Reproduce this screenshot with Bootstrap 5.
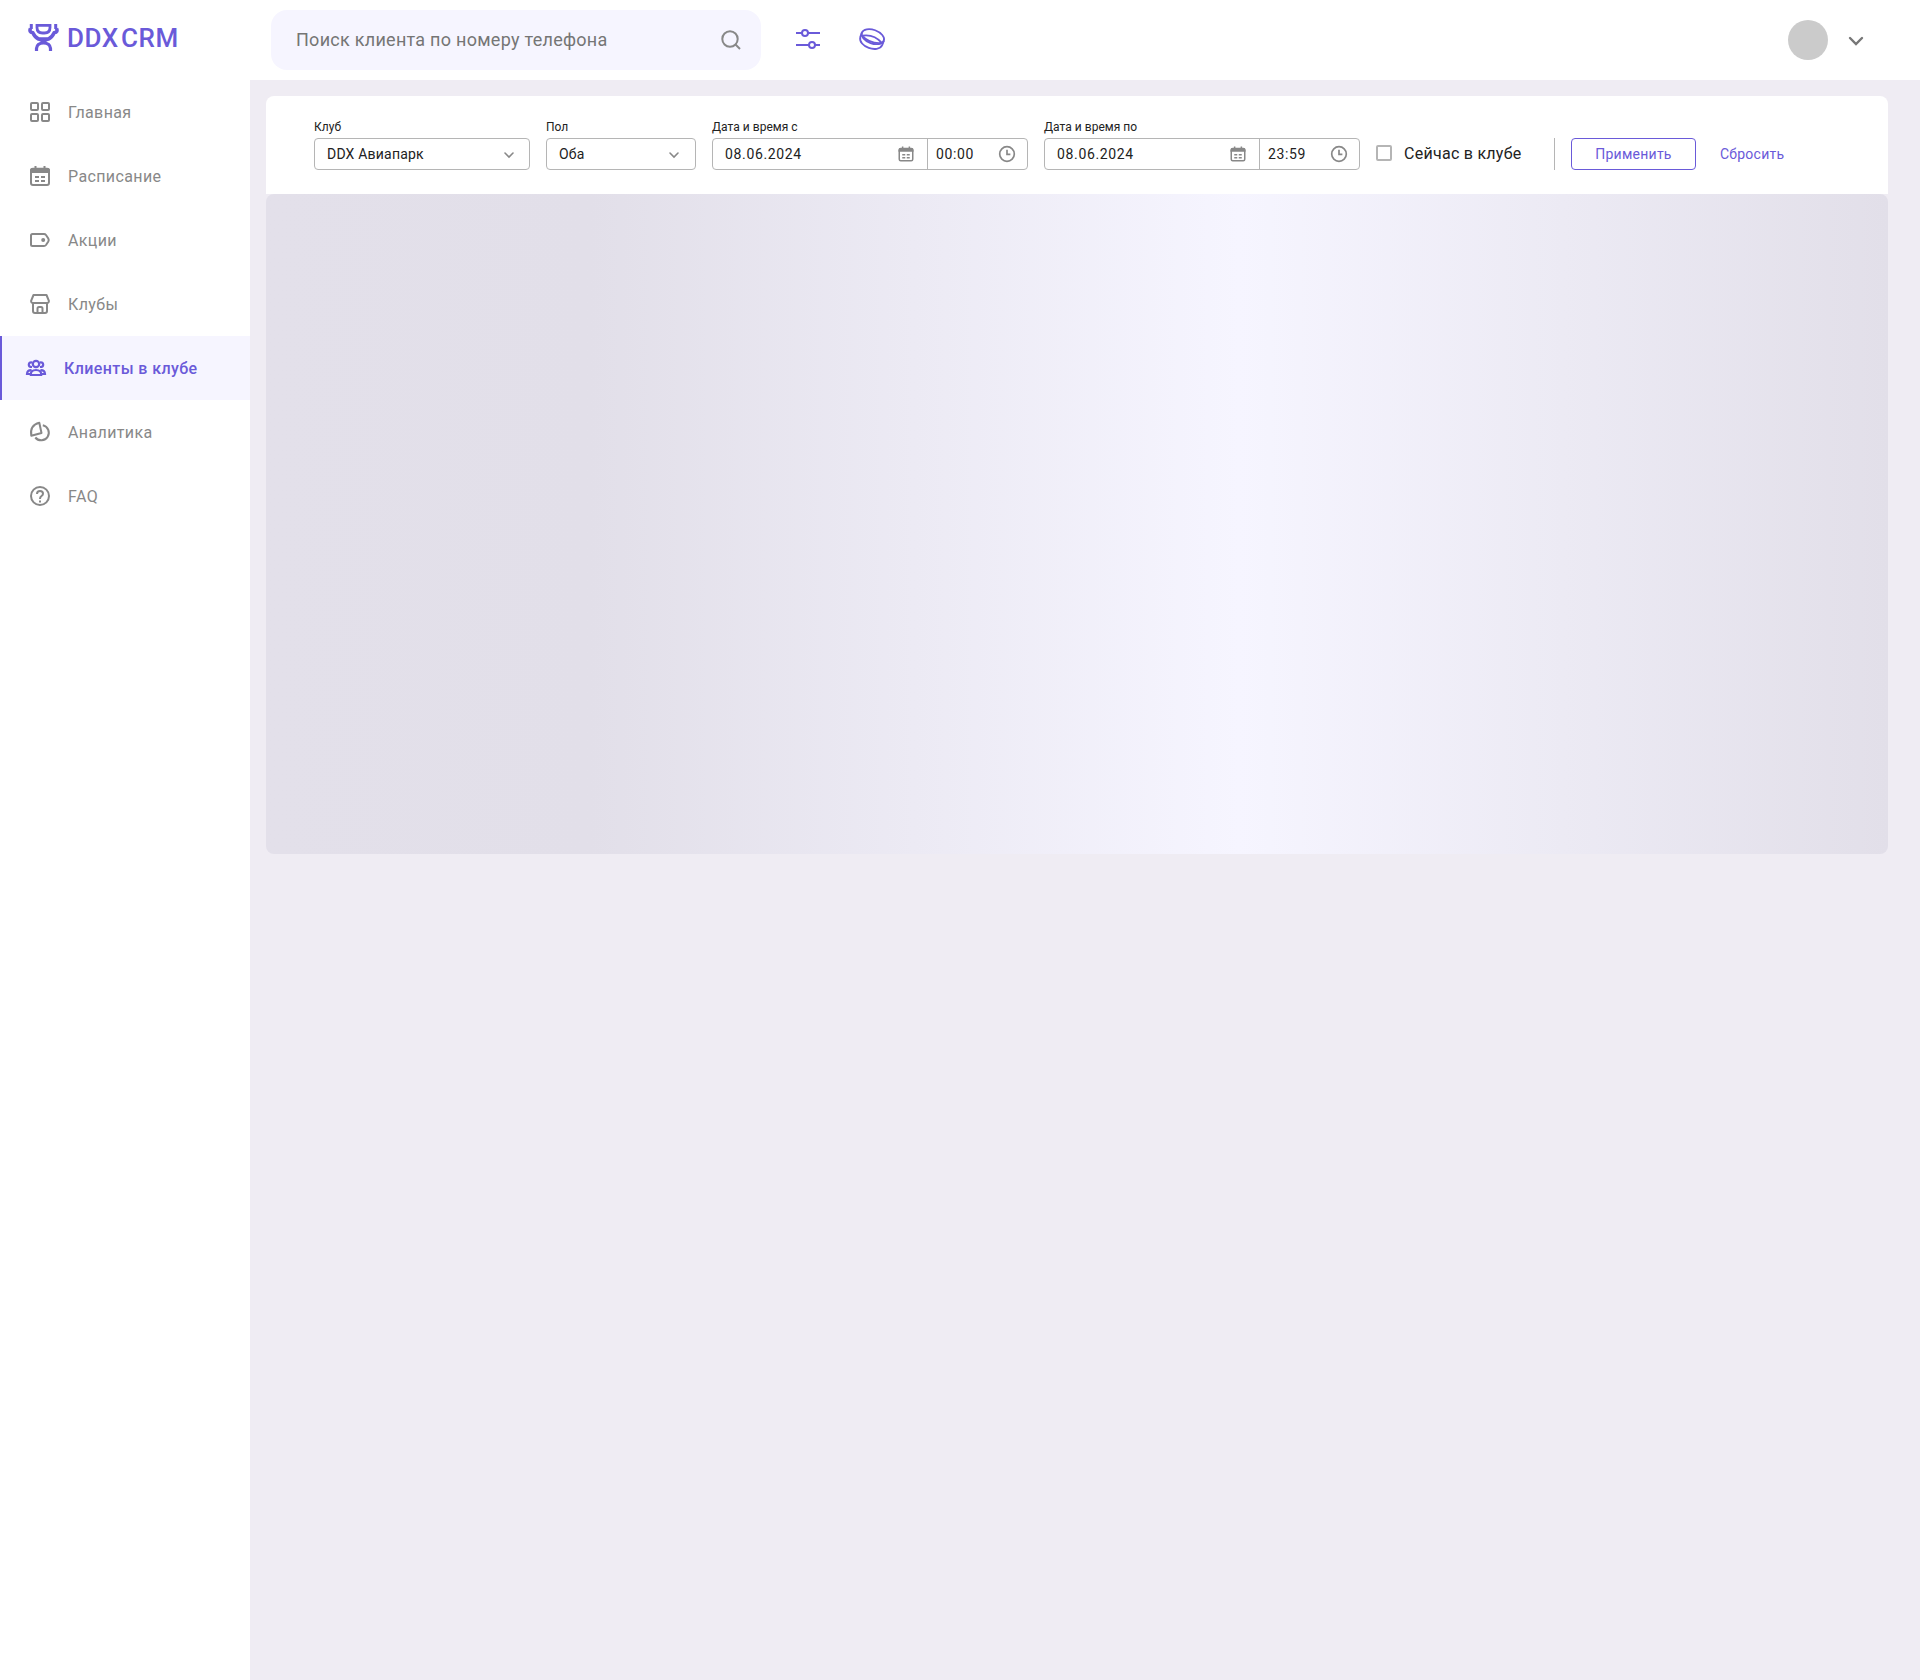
<!DOCTYPE html>
<html lang="ru">
<head>
<meta charset="utf-8">
<meta name="viewport" content="width=device-width, initial-scale=1">
<title>DDX CRM</title>
<link href="https://cdn.jsdelivr.net/npm/bootstrap@5.3.0/dist/css/bootstrap.min.css" rel="stylesheet">
<style>
:root{--violet:#6a5ad9;--grey:#888;--soft:#f6f5ff;--line:#b5b5b5}
body{font-family:Roboto,"Liberation Sans",sans-serif;background:#efecf3;color:#222}
svg{display:block;flex:none;fill:none;stroke:currentColor}
.side{width:250px;min-height:1680px;flex:none}
.brand-box{height:80px;padding:23px 0 0 28px;color:var(--violet)}
.brand-name{font-size:26px;line-height:30px;font-weight:500;letter-spacing:.5px;word-spacing:-4.500px;margin-left:8px}
.side .nav-link{height:64px;padding:0 0 0 28px;gap:16px;font-size:16px;letter-spacing:.38px;color:var(--grey)}
.side .nav-link span{padding-top:2px}
.side .nav-link.active{background:var(--soft);color:var(--violet);font-weight:500;border-left:2px solid var(--violet);padding-left:22px;letter-spacing:.4px}
.topbar{height:80px;padding:0 52px 0 21px}
.tools{margin-left:34px;gap:37px;padding-bottom:2px;color:var(--violet)}
.search{width:490px;height:60px;border-radius:16px;background:var(--soft);padding:0 19px 0 25px}
.search svg{color:var(--grey)}
.search input{font-size:18px;letter-spacing:.27px;margin-bottom:2px}
.search input::placeholder{color:#757575;opacity:1}
.avatar{width:40px;height:40px;background:#cbcbcb}
.more{color:#777;padding-top:1px}
.filters{height:98px;border-radius:8px 8px 0 0;padding:0 48px 24px;gap:16px}
.filters label{font-size:12px;line-height:14px;letter-spacing:.03px;display:block}
.box{height:32px;border:1px solid var(--line);border-radius:4px;font-size:14px;letter-spacing:.2px;background:#fff}
.box svg{color:var(--grey)}
.club{width:216px}.sex{width:150px}
.pick{padding:0 12px}
.sex .pick{padding-right:13px}
.pick svg{margin-top:2px}
.day{width:214px;padding:0 12px;letter-spacing:.65px}
.hour{border-left:1px solid var(--line);padding:0 11px 0 8px;letter-spacing:.6px}
.period{width:316px}
.now{width:146px;height:32px;font-size:16px;letter-spacing:.27px;gap:12px;white-space:nowrap}
.tick{width:16px;height:16px;flex:none;border:2px solid var(--line);border-radius:2px;margin-bottom:2px}
.rule{width:1px;height:32px;background:var(--line)}
.btn-apply,.btn-reset{height:32px;font-size:14px;line-height:18px;letter-spacing:.25px;padding:0;color:var(--violet)}
.btn-apply{width:125px;border:1px solid var(--violet);border-radius:4px}
.skeleton{height:660px;border-radius:8px;background:linear-gradient(90deg,#e3e0ea 0%,#e2dfe9 20%,#f6f5ff 60%,#e2dfe9)}
</style>
</head>
<body>
<svg width="0" height="0" class="position-absolute">
  <symbol id="cal" viewBox="0 0 24 24"><path d="M2 9V6.500Q2 4 4.500 4H19.500Q22 4 22 6.500V9Z" fill="currentColor" stroke="none"/><rect x="3" y="4.800" width="18" height="16.200" rx="2" stroke-width="2"/><path d="M7.500 2V6M16.500 2V6M7 13H11M13 13H17M7 17H11M13 17H17" stroke-width="2"/></symbol>
  <symbol id="down" viewBox="0 0 24 24"><path d="M6 9L12 15L18 9" stroke-width="2.400" stroke-linecap="round"/></symbol>
  <symbol id="clock" viewBox="0 0 16 16"><circle cx="8" cy="8" r="6.500" stroke-width="1.500"/><path d="M8 4.200V8.300H11" stroke-width="1.500"/></symbol>
</svg>
<div class="d-flex">
  <aside class="side bg-white">
    <a class="brand-box d-flex align-items-start text-decoration-none" href="#">
      <svg width="31" height="28" viewBox="0 0 31 28" stroke-width="3"><path d="M3.300 1V6M27.700 1V6"/><path d="M2.500 5.500Q.8 9 4.800 9.800Q7 14.500 10.500 16H20.500Q24 14.500 26.200 9.800Q30.200 9 28.500 5.500" stroke-width="3.600"/><path d="M9 2.400H22V4.500Q22 10 16.500 10H14.500Q9 10 9 4.500Z" stroke-width="2.800"/><path d="M11 16L15.500 18.500L20 16" stroke-width="3.200"/><path d="M8.500 28V25.500Q9 20 15.500 20Q22 20 22.500 25.500V28" stroke-width="3.200"/></svg>
      <span class="brand-name">DDX CRM</span>
    </a>
    <nav class="nav flex-column flex-nowrap">
      <a class="nav-link d-flex align-items-center" href="#"><svg width="24" height="24" viewBox="0 0 24 24" stroke-width="2"><rect x="3" y="3" width="7" height="7" rx="1"/><rect x="14" y="3" width="7" height="7" rx="1"/><rect x="3" y="14" width="7" height="7" rx="1"/><rect x="14" y="14" width="7" height="7" rx="1"/></svg><span>Главная</span></a>
      <a class="nav-link d-flex align-items-center" href="#"><svg width="24" height="24"><use href="#cal"/></svg><span>Расписание</span></a>
      <a class="nav-link d-flex align-items-center" href="#"><svg width="24" height="24" viewBox="0 0 24 24" stroke-width="2"><path d="M4.500 6H16Q17.200 6 18 7L20.300 10.500Q21.200 12 20.300 13.500L18 17Q17.200 18 16 18H4.500Q3 18 3 16.500V7.500Q3 6 4.500 6Z"/><circle cx="15.200" cy="12" r="2" fill="currentColor" stroke="none"/></svg><span>Акции</span></a>
      <a class="nav-link d-flex align-items-center" href="#"><svg width="24" height="24" viewBox="0 0 24 24" stroke-width="2"><path d="M5.500 3H18.500L20.900 8.800Q21 11 19 11H5Q3 11 3.100 8.800Z" stroke-linejoin="round"/><path d="M5 11V19Q5 21 7 21H17Q19 21 19 19V11M9.500 21V16.500Q9.500 15 11 15H13Q14.500 15 14.500 16.500V21"/></svg><span>Клубы</span></a>
      <a class="nav-link active d-flex align-items-center" href="#"><svg width="24" height="24" viewBox="0 0 24 24" stroke-width="2.200"><circle cx="12" cy="8" r="3.200"/><path d="M8.200 6.500Q4.800 5.800 4.800 8.800Q5 11 8 11M15.800 6.500Q19.200 5.800 19.200 8.800Q19 11 16 11M6.800 19Q6.500 14 12 14Q17.500 14 17.200 19ZM7.500 14.200Q3.200 14 3 18H6.500M16.500 14.200Q20.800 14 21 18H17.500"/></svg><span>Клиенты в клубе</span></a>
      <a class="nav-link d-flex align-items-center" href="#"><svg width="24" height="24" viewBox="0 0 24 24" stroke-width="2" stroke-linejoin="round"><path d="M11.300 2.800L13.500 13L3.300 15.800Q1.500 5.300 11.300 2.800Z"/><path d="M14.800 5.300A7.600 7.600 0 1 1 7.300 17.500"/></svg><span>Аналитика</span></a>
      <a class="nav-link d-flex align-items-center" href="#"><svg width="24" height="24" viewBox="0 0 24 24" stroke-width="2"><circle cx="12" cy="12" r="9"/><path d="M9 10Q9 7 12 7Q15 7 15 9.700Q15 11 13.500 12Q12 13 12 15M12 16.500V18.500"/></svg><span>FAQ</span></a>
    </nav>
  </aside>
  <div class="flex-grow-1">
    <header class="topbar bg-white d-flex align-items-center">
      <div class="search d-flex align-items-center">
        <input class="border-0 bg-transparent p-0 flex-grow-1" type="text" placeholder="Поиск клиента по номеру телефона">
        <svg width="22" height="22" viewBox="0 0 22 22" stroke-width="2"><circle cx="10" cy="10" r="7.700"/><path d="M15.500 15.500L20 20"/></svg>
      </div>
      <div class="tools d-flex align-items-center">
        <svg width="26" height="24" viewBox="0 0 26 24" stroke-width="2"><path d="M1 6H7M13 6H25M1 18H14M20 18H25"/><circle cx="10" cy="6" r="3"/><circle cx="17" cy="18" r="3"/></svg>
        <svg width="28" height="24" viewBox="0 0 28 24" stroke-width="1.800"><g transform="rotate(20 14 12)"><ellipse cx="14" cy="9.500" rx="11.700" ry="6.800"/><path d="M3.400 12.300Q14 6.300 24.600 12.300Q14 17.500 3.400 12.300Z"/><path d="M2.300 9.500V14C3.200 24 24.800 24 25.700 14V9.500"/></g></svg>
      </div>
      <div class="avatar rounded-circle ms-auto"></div>
      <svg class="more ms-3" width="24" height="25"><use href="#down"/></svg>
    </header>
    <main class="ps-3 pt-3 pe-4 me-2">
      <form class="filters bg-white d-flex align-items-end">
        <div class="club"><label>Клуб</label><div class="box pick mt-1 d-flex align-items-center justify-content-between"><span>DDX Авиапарк</span><svg width="16" height="16"><use href="#down"/></svg></div></div>
        <div class="sex"><label>Пол</label><div class="box pick mt-1 d-flex align-items-center justify-content-between"><span>Оба</span><svg width="16" height="16"><use href="#down"/></svg></div></div>
        <div class="period"><label>Дата и время с</label><div class="box mt-1 d-flex"><div class="day d-flex align-items-center justify-content-between"><span>08.06.2024</span><svg width="18" height="18"><use href="#cal"/></svg></div><div class="hour flex-grow-1 d-flex align-items-center justify-content-between"><span>00:00</span><svg width="18" height="18"><use href="#clock"/></svg></div></div></div>
        <div class="period"><label>Дата и время по</label><div class="box mt-1 d-flex"><div class="day d-flex align-items-center justify-content-between"><span>08.06.2024</span><svg width="18" height="18"><use href="#cal"/></svg></div><div class="hour flex-grow-1 d-flex align-items-center justify-content-between"><span>23:59</span><svg width="18" height="18"><use href="#clock"/></svg></div></div></div>
        <div class="now d-flex align-items-center"><span class="tick"></span><span>Сейчас в клубе</span></div>
        <div class="rule ms-3"></div>
        <button type="button" class="btn btn-apply">Применить</button>
        <button type="button" class="btn btn-reset border-0 ms-2">Сбросить</button>
      </form>
      <div class="skeleton"></div>
    </main>
  </div>
</div>
<script src="https://cdn.jsdelivr.net/npm/bootstrap@5.3.0/dist/js/bootstrap.bundle.min.js"></script>
</body>
</html>
